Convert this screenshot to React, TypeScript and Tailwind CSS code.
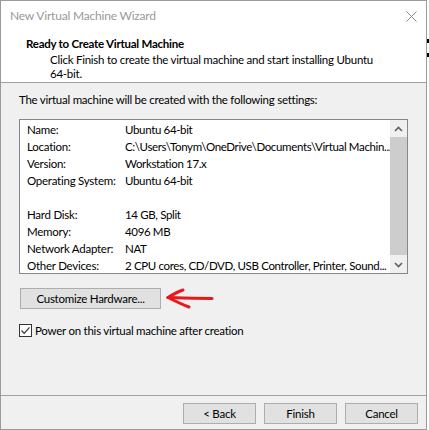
import React from "react";

const rows: [string, string][] = [
  ["Name:", "Ubuntu 64-bit"],
  ["Location:", "C:\\Users\\Tonym\\OneDrive\\Documents\\Virtual Machin..."],
  ["Version:", "Workstation 17.x"],
  ["Operating System:", "Ubuntu 64-bit"],
  ["", ""],
  ["Hard Disk:", "14 GB, Split"],
  ["Memory:", "4096 MB"],
  ["Network Adapter:", "NAT"],
  ["Other Devices:", "2 CPU cores, CD/DVD, USB Controller, Printer, Sound..."],
];

function WinButton({ label, className }: { label: string; className?: string }) {
  return (
    <button
      type="button"
      className={`h-[21px] bg-[#e1e1e1] border border-[#adadad] text-[11.5px] tracking-[-0.25px] text-black leading-none ${className ?? ""}`}
    >
      {label}
    </button>
  );
}

function RedArrow() {
  return (
    <svg width="50" height="21" viewBox="0 0 50 21" className="ml-[4px]">
      <g stroke="#e8191b" strokeWidth="3" strokeLinecap="round" fill="none">
        <path d="M3 9.5 C 18 10, 32 10.5, 47 10.5" />
        <path d="M18 2 C 12 4, 7 7, 3 9.5" />
        <path d="M3 9.5 C 10 13, 17 16.5, 24 19" />
      </g>
    </svg>
  );
}

export default function App() {
  return (
    <div className="w-[429px] h-[430px] bg-white flex font-['Segoe_UI','Lato',sans-serif] text-black text-[11.5px] tracking-[-0.25px]">
      <div className="w-[427px] h-[430px] border border-[#9a9a9a] flex flex-col">
        <div className="h-[30px] bg-white flex items-center justify-between pl-[9px] pr-[9px]">
          <span className="text-[12px] tracking-[-0.2px] text-[#999999]">New Virtual Machine Wizard</span>
          <svg width="11" height="11" viewBox="0 0 11 11">
            <path d="M0.5 0.5 L10.5 10.5 M10.5 0.5 L0.5 10.5" stroke="#8a8a8a" strokeWidth="1" />
          </svg>
        </div>

        <div className="h-[52px] bg-white border-b border-[#a0a0a0] pl-[25px] pt-[5px]">
          <div className="font-bold leading-[16px]">Ready to Create Virtual Machine</div>
          <div className="pl-[24px] leading-[14px] mt-[1px]">
            Click Finish to create the virtual machine and start installing Ubuntu
            <br />
            64-bit.
          </div>
        </div>

        <div className="flex-1 bg-[#f0f0f0] px-[18px] pt-[9px] flex flex-col">
          <div className="leading-[16px]">The virtual machine will be created with the following settings:</div>

          <div className="mt-[11px] h-[155px] bg-white border border-[#828790] flex">
            <div className="flex-1 pl-[7px] pt-[1px] overflow-hidden">
              {rows.map(([k, v], i) => (
                <div key={i} className="flex h-[17px] items-center whitespace-nowrap">
                  <span className="w-[98px] shrink-0">{k}</span>
                  <span className="tracking-[-0.35px]">{v}</span>
                </div>
              ))}
            </div>
            <div className="w-[17px] bg-[#f0f0f0] flex flex-col">
              <div className="h-[17px] flex items-center justify-center">
                <svg width="9" height="6" viewBox="0 0 9 6">
                  <path d="M1 5 L4.5 1.5 L8 5" stroke="#606060" strokeWidth="1.6" fill="none" />
                </svg>
              </div>
              <div className="flex-1 bg-[#cdcdcd] mb-[1px]" />
              <div className="h-[17px] flex items-center justify-center">
                <svg width="9" height="6" viewBox="0 0 9 6">
                  <path d="M1 1 L4.5 4.5 L8 1" stroke="#606060" strokeWidth="1.6" fill="none" />
                </svg>
              </div>
            </div>
          </div>

          <div className="mt-[14px] flex items-center">
            <WinButton label="Customize Hardware..." className="w-[141px] ml-[1px]" />
            <RedArrow />
          </div>

          <label className="mt-[15px] flex items-center gap-[3px] leading-[13px]">
            <span className="w-[13px] h-[13px] bg-white border border-[#333333] flex items-center justify-center">
              <svg width="11" height="11" viewBox="0 0 11 11">
                <path d="M1.5 5.5 L4.2 8.3 L9.5 2.3" stroke="#333333" strokeWidth="1.2" fill="none" />
              </svg>
            </span>
            Power on this virtual machine after creation
          </label>
        </div>

        <div className="h-[34px] bg-[#f0f0f0] border-t border-[#a0a0a0] flex items-start justify-end pt-[7px] pr-[8px] gap-[8px]">
          <WinButton label="< Back" className="w-[73px]" />
          <WinButton label="Finish" className="w-[73px]" />
          <WinButton label="Cancel" className="w-[73px]" />
        </div>
      </div>
      <div className="flex-1 relative">
        <div className="absolute top-[39px] left-0 w-[2px] h-[4px] bg-black" />
        <div className="absolute top-[53px] left-0 w-[2px] h-[4px] bg-black" />
      </div>
    </div>
  );
}
